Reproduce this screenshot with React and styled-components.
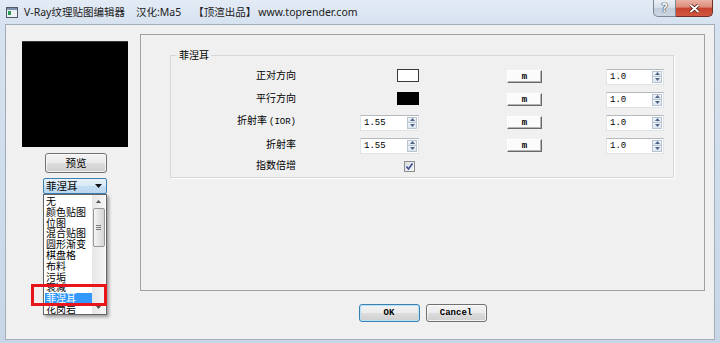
import React from "react";
import styled, { createGlobalStyle } from "styled-components";

const CJK = `"Noto Sans CJK SC", "Noto Sans", sans-serif`;
const TITLE = `"Noto Sans", "Noto Sans CJK SC", sans-serif`;
const MONO = `"Liberation Mono", "Noto Sans CJK SC", monospace`;

const GlobalStyle = createGlobalStyle`
  html, body {
    margin: 0;
    padding: 0;
  }
  body {
    width: 720px;
    height: 343px;
    overflow: hidden;
    background: #cad8e9;
  }
  * {
    box-sizing: border-box;
  }
`;

const mapTypes = [
  "无",
  "颜色贴图",
  "位图",
  "混合贴图",
  "圆形渐变",
  "棋盘格",
  "布料",
  "污垢",
  "衰减",
  "菲涅耳",
  "花岗岩",
];

const Up = () => (
  <svg width="5" height="3" viewBox="0 0 5 3">
    <polygon points="0,3 2.5,0 5,3" fill="#4e6587" />
  </svg>
);

const Down = () => (
  <svg width="5" height="3" viewBox="0 0 5 3">
    <polygon points="0,0 5,0 2.5,3" fill="#4e6587" />
  </svg>
);

const SpinBox = ({ value, width }) => (
  <SpinField $width={width}>
    <SpinValue>{value}</SpinValue>
    <SpinButtons>
      <SpinArrow><Up /></SpinArrow>
      <SpinArrow><Down /></SpinArrow>
    </SpinButtons>
  </SpinField>
);

const App = () => {
  const rows = [
    { label: "正对方向", mid: <Swatch $color="#fff" />, value: "1.0" },
    { label: "平行方向", mid: <Swatch $color="#000" />, value: "1.0" },
    { label: "折射率", tag: "(IOR)", mid: <SpinBox value="1.55" width={59} />, value: "1.0" },
    { label: "折射率", mid: <SpinBox value="1.55" width={59} />, value: "1.0" },
    {
      label: "指数倍增",
      mid: (
        <CheckBox>
          <svg width="9" height="9" viewBox="0 0 9 9">
            <path d="M1.5 4.5 L3.5 7 L7.5 1.5" fill="none" stroke="#3b4f91" strokeWidth="1.6" />
          </svg>
        </CheckBox>
      ),
    },
  ];

  return (
    <Window>
      <GlobalStyle />
      <TitleBar>
        <AppIcon width="12" height="11" viewBox="0 0 12 11">
          <rect x="0.5" y="0.5" width="11" height="10" fill="#eef1f4" stroke="#4f5a66" />
          <rect x="1" y="1" width="10" height="2" fill="#7d93ad" />
          <rect x="2" y="4" width="3" height="4" fill="#2b9c52" />
        </AppIcon>
        <Title>
          <span>V-Ray纹理贴图编辑器</span>
          <TitlePart $gap={11}>汉化:Ma5</TitlePart>
          <TitlePart $gap={12}>【顶渲出品】</TitlePart>
          <TitlePart $gap={2}>www.toprender.com</TitlePart>
        </Title>
        <CaptionButton>
          <HelpMark>?</HelpMark>
        </CaptionButton>
        <CaptionButton $close>
          <svg width="11" height="9" viewBox="0 0 11 9">
            <path d="M1.5 1 L9.5 8 M9.5 1 L1.5 8" stroke="#4a1a12" strokeWidth="3.4" />
            <path d="M1.5 1 L9.5 8 M9.5 1 L1.5 8" stroke="#fff" strokeWidth="1.8" />
          </svg>
        </CaptionButton>
      </TitleBar>

      <Frame>
        <Client>
          <LeftColumn>
            <Preview />
            <PreviewButton>预览</PreviewButton>
            <ComboWrap>
              <Combo>
                <span>菲涅耳</span>
                <svg width="7" height="4" viewBox="0 0 7 4">
                  <polygon points="0,0 7,0 3.5,4" fill="#111" />
                </svg>
              </Combo>
              <DropList>
                <Items>
                  {mapTypes.map((t) => (
                    <Item key={t} $selected={t === "菲涅耳"}>{t}</Item>
                  ))}
                </Items>
                <ScrollBar>
                  <ScrollArrow>
                    <svg width="5" height="3" viewBox="0 0 5 3">
                      <polygon points="0,3 2.5,0 5,3" fill="#505050" />
                    </svg>
                  </ScrollArrow>
                  <Thumb>
                    <svg width="5" height="5" viewBox="0 0 5 5">
                      <path d="M0 0.5 H5 M0 2.5 H5 M0 4.5 H5" stroke="#7a7a7a" strokeWidth="1" />
                    </svg>
                  </Thumb>
                  <Track />
                  <ScrollArrow>
                    <svg width="5" height="3" viewBox="0 0 5 3">
                      <polygon points="0,0 5,0 2.5,3" fill="#505050" />
                    </svg>
                  </ScrollArrow>
                </ScrollBar>
                <RedMark />
              </DropList>
            </ComboWrap>
          </LeftColumn>

          <RightColumn>
            <Panel>
              <GroupBox>
                <Legend>菲涅耳</Legend>
                <ParamGrid>
                  {rows.map((r, i) => (
                    <React.Fragment key={i}>
                      <Label>
                        {r.label}
                        {r.tag && <Tag>{r.tag}</Tag>}
                      </Label>
                      <Cell>{r.mid}</Cell>
                      <Cell>{r.value && <MButton>m</MButton>}</Cell>
                      <Cell>{r.value && <SpinBox value={r.value} width={58} />}</Cell>
                    </React.Fragment>
                  ))}
                </ParamGrid>
              </GroupBox>
            </Panel>
            <ButtonRow>
              <DialogButton $primary>OK</DialogButton>
              <DialogButton>Cancel</DialogButton>
            </ButtonRow>
          </RightColumn>
        </Client>
      </Frame>
    </Window>
  );
};

const Window = styled.div`
  width: 720px;
  height: 343px;
  display: flex;
  flex-direction: column;
  background: linear-gradient(180deg, #e3ebf5 0%, #d6e2ef 24px, #c8d6e8 100%);
`;

const TitleBar = styled.div`
  height: 24px;
  flex: none;
  display: flex;
  align-items: flex-start;
  padding: 0 7px 0 6px;
`;

const AppIcon = styled.svg`
  flex: none;
  margin-top: 7px;
`;

const Title = styled.div`
  flex: 1;
  margin: 4px 0 0 6px;
  font: 10.5px/16px ${TITLE};
  color: #1b1b1b;
  white-space: nowrap;
`;

const TitlePart = styled.span`
  margin-left: ${(p) => p.$gap}px;
`;

const CaptionButton = styled.div`
  width: ${(p) => (p.$close ? 37 : 23)}px;
  height: 17px;
  display: flex;
  align-items: center;
  justify-content: center;
  border: 1px solid ${(p) => (p.$close ? "#6e3128" : "#7b8797")};
  border-top: none;
  border-left: ${(p) => (p.$close ? "none" : undefined)};
  border-radius: ${(p) => (p.$close ? "0 0 5px 0" : "0 0 0 5px")};
  background: ${(p) =>
    p.$close
      ? "linear-gradient(180deg, #eab1a4 0%, #dc8b78 45%, #c7432f 50%, #d2573f 100%)"
      : "linear-gradient(180deg, #eaeff5 0%, #d5dde7 50%, #c3cdd9 51%, #cbd5e1 100%)"};
`;

const HelpMark = styled.span`
  font: bold 12px/12px ${TITLE};
  color: #fff;
  text-shadow: 0 0 1px #2d3540, 0 0 1px #2d3540, 0 0 1px #2d3540;
`;

const Frame = styled.div`
  flex: 1;
  min-height: 0;
  display: flex;
  padding: 0 5px 3px 5px;
`;

const Client = styled.div`
  flex: 1;
  display: flex;
  background: #f0f0f0;
  border: 1px solid #a3adb9;
`;

const LeftColumn = styled.div`
  width: 134px;
  flex: none;
  display: flex;
  flex-direction: column;
  align-items: flex-start;
  padding: 16px 0 0 16px;
`;

const Preview = styled.div`
  width: 106px;
  height: 106px;
  background: #000;
  border-top: 1px solid #3a3a3a;
`;

const PreviewButton = styled.div`
  width: 62px;
  height: 20px;
  margin: 6px 0 0 23px;
  display: flex;
  align-items: center;
  justify-content: center;
  font: 10.5px/12px ${CJK};
  color: #000;
  border: 1px solid #707070;
  border-radius: 3px;
  background: linear-gradient(180deg, #f2f2f2 0%, #ebebeb 50%, #dddddd 50%, #cfcfcf 100%);
  box-shadow: inset 0 0 0 1px rgba(255, 255, 255, 0.7);
`;

const ComboWrap = styled.div`
  position: relative;
  width: 64px;
  height: 16px;
  margin: 5px 0 0 21px;
`;

const Combo = styled.div`
  height: 100%;
  display: flex;
  align-items: center;
  justify-content: space-between;
  padding: 0 4px 0 2px;
  font: 10.5px/14px ${CJK};
  color: #000;
  border: 1px solid #3c7fb1;
  border-radius: 2px;
  background: linear-gradient(180deg, #e8f2fb 0%, #d8e9f8 50%, #c4ddf3 50%, #bcd7f0 100%);
`;

const DropList = styled.div`
  position: absolute;
  top: 100%;
  left: 0;
  width: 64px;
  height: 121px;
  display: flex;
  background: #fff;
  border: 1px solid #646464;
  box-shadow: 2px 2px 3px rgba(0, 0, 0, 0.35);
  z-index: 2;
`;

const Items = styled.div`
  flex: 1;
  overflow: hidden;
  padding-top: 1px;
`;

const Item = styled.div`
  height: 10.8px;
  margin-left: 1px;
  padding-left: 1px;
  font: 10px/10.8px ${CJK};
  white-space: nowrap;
  color: ${(p) => (p.$selected ? "#fff" : "#000")};
  background: ${(p) => (p.$selected ? "#3399ff" : "transparent")};
`;

const ScrollBar = styled.div`
  width: 13px;
  flex: none;
  display: flex;
  flex-direction: column;
  align-items: center;
  margin: 0 1px 0 0;
  background: linear-gradient(90deg, #e6e6e6 0%, #f4f4f4 100%);
`;

const ScrollArrow = styled.div`
  width: 13px;
  height: 13px;
  flex: none;
  display: flex;
  align-items: center;
  justify-content: center;
`;

const Thumb = styled.div`
  width: 12px;
  height: 39px;
  flex: none;
  display: flex;
  align-items: center;
  justify-content: center;
  border: 1px solid #979797;
  border-radius: 2px;
  background: linear-gradient(90deg, #f4f4f4 0%, #e4e4e4 50%, #d6d6d6 100%);
`;

const Track = styled.div`
  flex: 1;
`;

const RedMark = styled.div`
  position: absolute;
  left: -13px;
  top: 89px;
  width: 76px;
  height: 22px;
  border: 3px solid #e8161b;
  pointer-events: none;
  z-index: 3;
`;

const RightColumn = styled.div`
  width: 565px;
  flex: none;
  display: flex;
  flex-direction: column;
  padding-top: 9px;
`;

const Panel = styled.div`
  height: 257px;
  border: 1px solid #a0a0a0;
  padding-left: 29px;
`;

const GroupBox = styled.fieldset`
  width: 504px;
  margin: 13px 0 0 0;
  padding: 3px 0 1px 0;
  min-width: 0;
  border: 1px solid #d5d9dd;
  box-shadow: 1px 1px 0 #fff;
`;

const Legend = styled.legend`
  margin-left: 6px;
  padding: 0 2px;
  font: 10px/14px ${CJK};
  color: #000;
`;

const ParamGrid = styled.div`
  display: grid;
  grid-template-columns: 125px 123px 123px 122px;
  grid-template-rows: repeat(4, 23px) 19px;
  align-items: center;
  justify-items: end;
`;

const Label = styled.div`
  font: 10px/12px ${CJK};
  color: #000;
  white-space: nowrap;
  margin-bottom: 3px;
`;

const Tag = styled.span`
  font: 9px/12px ${MONO};
  margin-left: 2px;
`;

const Cell = styled.div`
  display: flex;
  align-items: center;
`;

const Swatch = styled.div`
  width: 22px;
  height: 13px;
  margin-bottom: 2px;
  background: ${(p) => p.$color};
  border: 1px solid ${(p) => (p.$color === "#000" ? "#000" : "#3a3a3a")};
`;

const SpinField = styled.div`
  width: ${(p) => p.$width}px;
  height: 16px;
  display: flex;
  align-items: stretch;
  background: #fff;
  border: 1px solid #dfe3e8;
  border-top-color: #b5b8bd;
`;

const SpinValue = styled.div`
  flex: 1;
  padding-left: 3px;
  font: 9px/14px ${MONO};
  color: #000;
`;

const SpinButtons = styled.div`
  width: 10px;
  margin: 1px 1px 1px 0;
  display: flex;
  flex-direction: column;
`;

const SpinArrow = styled.div`
  flex: 1;
  display: flex;
  align-items: center;
  justify-content: center;
  border: 1px solid #b9c4d2;
  background: linear-gradient(180deg, #f1f5fa 0%, #dce5ef 100%);
  & + & {
    border-top: none;
  }
`;

const CheckBox = styled.div`
  width: 11px;
  height: 11px;
  margin-right: 4px;
  display: flex;
  align-items: center;
  justify-content: center;
  border: 1px solid #8e8f8f;
  background: linear-gradient(135deg, #d9dcdf 0%, #f7f7f7 100%);
`;

const MButton = styled.div`
  width: 35px;
  height: 13px;
  display: flex;
  align-items: center;
  justify-content: center;
  font: bold 9px/10px ${MONO};
  color: #000;
  background: #fbfbfb;
  border: 1px solid;
  border-color: #fff #696969 #696969 #fff;
  box-shadow: inset -1px -1px 0 #b4b4b4;
`;

const ButtonRow = styled.div`
  display: flex;
  justify-content: center;
  gap: 6px;
  margin-top: 13px;
`;

const DialogButton = styled.div`
  width: 61px;
  height: 18px;
  display: flex;
  align-items: center;
  justify-content: center;
  font: bold 9px/12px ${MONO};
  color: #000;
  border: 1px solid ${(p) => (p.$primary ? "#3c7fb1" : "#707070")};
  border-radius: 3px;
  background: linear-gradient(180deg, #f2f2f2 0%, #ebebeb 50%, #dddddd 50%, #cfcfcf 100%);
  box-shadow: inset 0 0 0 1px ${(p) => (p.$primary ? "#b6e3f7" : "rgba(255,255,255,0.7)")};
`;

export default App;
